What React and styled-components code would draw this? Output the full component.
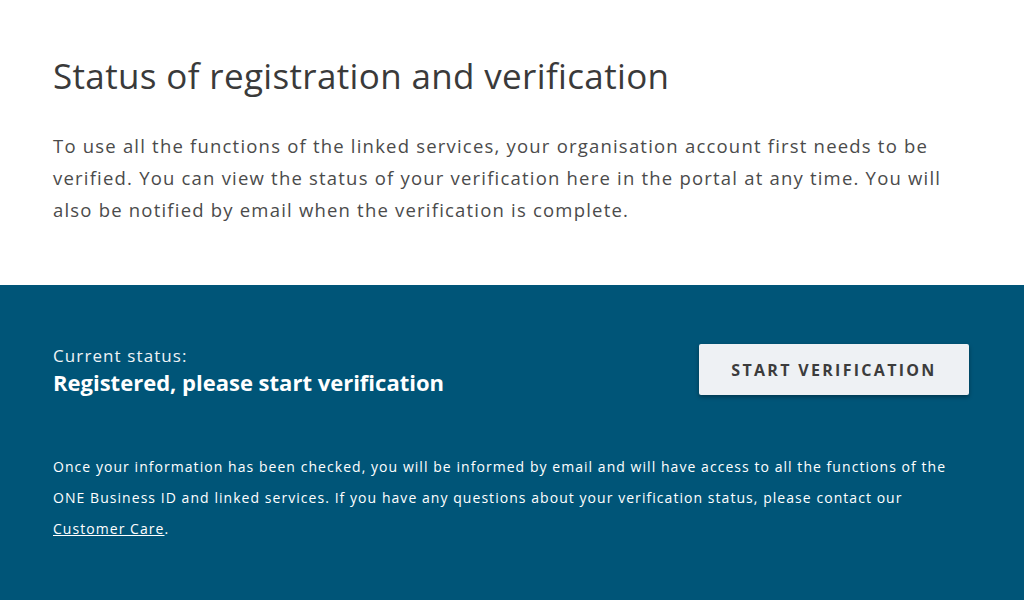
import React from "react";
import styled, { createGlobalStyle } from "styled-components";

const Global = createGlobalStyle`
  html, body { margin: 0; padding: 0; background: #ffffff; }
  body { font-family: "Open Sans", "Noto Sans", sans-serif; }
  * { box-sizing: border-box; }
`;

const Page = styled.div`
  width: 1024px;
  height: 600px;
  overflow: hidden;
  display: flex;
  flex-direction: column;
`;

const Intro = styled.section`
  padding: 52px 53px 0 53px;
  height: 285px;
  background: #ffffff;
`;

const Title = styled.h1`
  margin: 0 0 30px 0;
  font-size: 35px;
  line-height: 48px;
  font-weight: 400;
  letter-spacing: 0.35px;
  color: #3a3a3a;
`;

const Lead = styled.p`
  margin: 0;
  font-size: 18.5px;
  line-height: 32px;
  letter-spacing: 1.2px;
  color: #4b4b4b;
  max-width: 905px;
`;

const Panel = styled.section`
  flex: 1;
  background: #005578;
  color: #ffffff;
  padding: 58px 55px 0 53px;
`;

const StatusRow = styled.div`
  display: flex;
  justify-content: space-between;
  align-items: flex-start;
`;

const StatusBlock = styled.div`
  display: flex;
  flex-direction: column;
  padding-top: 2px;
`;

const StatusLabel = styled.span`
  font-size: 17px;
  line-height: 22px;
  letter-spacing: 1.1px;
  color: #eef3f6;
`;

const StatusValue = styled.span`
  font-size: 22px;
  line-height: 30px;
  font-weight: 700;
`;

const Button = styled.button`
  width: 270px;
  height: 51px;
  margin-top: 1px;
  background: #eef1f4;
  border: none;
  border-radius: 2px;
  box-shadow: 0 2px 4px rgba(0, 0, 0, 0.35);
  font-family: inherit;
  font-size: 16px;
  font-weight: 700;
  letter-spacing: 2.3px;
  color: #3c3c3c;
  cursor: pointer;
`;

const Note = styled.p`
  margin: 54px 0 0 0;
  font-size: 14px;
  line-height: 31px;
  letter-spacing: 1.05px;
  max-width: 915px;
`;

const Link = styled.a`
  color: #ffffff;
  text-decoration: underline;
`;

export default function App() {
  return (
    <>
      <Global />
      <Page>
        <Intro>
          <Title>Status of registration and verification</Title>
          <Lead>
            To use all the functions of the linked services, your organisation account first needs to be
            verified. You can view the status of your verification here in the portal at any time. You will
            also be notified by email when the verification is complete.
          </Lead>
        </Intro>
        <Panel>
          <StatusRow>
            <StatusBlock>
              <StatusLabel>Current status:</StatusLabel>
              <StatusValue>Registered, please start verification</StatusValue>
            </StatusBlock>
            <Button>START VERIFICATION</Button>
          </StatusRow>
          <Note>
            Once your information has been checked, you will be informed by email and will have access to all the functions of the
            ONE Business ID and linked services. If you have any questions about your verification status, please contact our{" "}
            <Link href="#">Customer Care</Link>.
          </Note>
        </Panel>
      </Page>
    </>
  );
}
